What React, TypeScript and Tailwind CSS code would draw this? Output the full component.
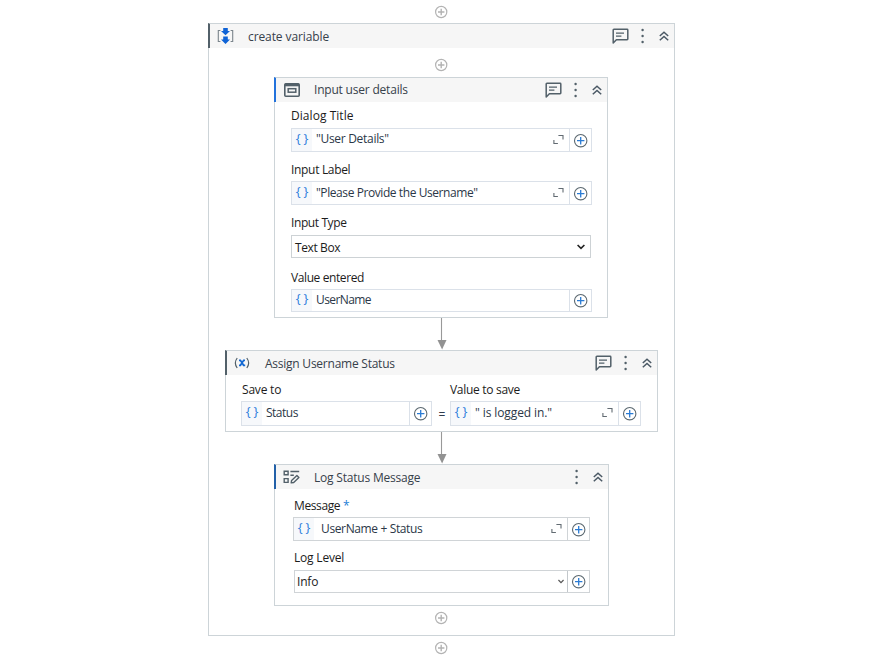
import type { ReactNode } from "react";
import { clsx } from "clsx";

function AddStep() {
  return (
    <svg className="block size-[14px] shrink-0" viewBox="0 0 14 14" fill="none" stroke="#b3b3b3">
      <circle cx="7.2" cy="7" r="5.6" strokeWidth="1.2" />
      <path d="M7.2 3.8v6.4M4 7h6.4" strokeWidth="1.4" />
    </svg>
  );
}

function AddButton() {
  return (
    <svg className="block size-[15px]" viewBox="0 0 15 15" fill="none">
      <circle cx="7.7" cy="7.7" r="6.2" stroke="#5b6870" strokeWidth="1.1" />
      <path d="M7.7 4v7.4M4 7.7h7.4" stroke="#2a7bd4" strokeWidth="1.3" />
    </svg>
  );
}

function CommentIcon() {
  return (
    <svg className="block h-[17px] w-[17px]" viewBox="0 0 17 17" fill="none" stroke="#526069" strokeWidth="1.5">
      <path d="M1.2 15V2q0-.7.7-.7h13.2q.7 0 .7.7v9q0 .7-.7.7H4.4z" strokeLinejoin="round" />
      <path d="M4 5.2h8M4 8.1h5.4" strokeWidth="1.3" />
    </svg>
  );
}

function DotsIcon() {
  return (
    <svg className="block h-[16px] w-[4px]" viewBox="0 0 4 16" fill="#526069">
      <circle cx="1.6" cy="2" r="1.2" />
      <circle cx="1.6" cy="8" r="1.2" />
      <circle cx="1.6" cy="14" r="1.2" />
    </svg>
  );
}

function CollapseIcon() {
  return (
    <svg className="block h-[10px] w-[10px]" viewBox="0 0 10 10" fill="none" stroke="#4b5965" strokeWidth="1.5">
      <path d="M.8 5 5 1.2 9.2 5M.8 9.3 5 5.5l4.2 3.8" />
    </svg>
  );
}

function ExpandIcon() {
  return (
    <svg className="block h-[11px] w-[11px]" viewBox="0 0 11 11" fill="none" stroke="#626b72" strokeWidth="1.1">
      <path d="M5.4 1.5h4.6v4M.9 6v3.5h4" />
    </svg>
  );
}

function Chevron({ small }: { small?: boolean }) {
  return (
    <svg
      className={small ? "block h-[5px] w-[6px]" : "block h-[6px] w-[8px]"}
      viewBox="0 0 8 6"
      fill="none"
      stroke={small ? "#555" : "#222"}
      strokeWidth="1.6"
    >
      <path d="M.6 1 4 4.4 7.4 1" />
    </svg>
  );
}

function SequenceIcon() {
  return (
    <svg className="block h-[16px] w-[17px]" viewBox="0 0 17 16" fill="none">
      <path d="M3.4 2.5H1.3v11h2.1M13.6 2.5h2.1v11h-2.1" stroke="#7b858c" strokeWidth="1.1" />
      <path d="M6.2 0h4.6v3h2.2L8.5 7.2 4 3h2.2zM6.2 8.6h4.6v2.8H13L8.5 16 4 11.4h2.2z" fill="#0f63d6" />
    </svg>
  );
}

function DialogIcon() {
  return (
    <svg className="block h-[14px] w-[16px]" viewBox="0 0 16 14" fill="none" stroke="#526069">
      <rect x=".8" y=".8" width="14.4" height="12.4" rx="1" strokeWidth="1.6" />
      <path d="M1 2h14" strokeWidth="2.6" />
      <rect x="4.2" y="5.7" width="7.6" height="3.5" strokeWidth="1.5" />
    </svg>
  );
}

function AssignIcon() {
  return (
    <svg className="block h-[12px] w-[16px]" viewBox="0 0 16 12" fill="none">
      <path d="M3.2 1Q-.5 6 3.2 11M12.8 1q3.7 5 0 10" stroke="#526069" strokeWidth="1.2" />
      <path d="M5 3.3h1.4l3.2 5h1.6M11 3.3H9.7L6.4 8.3H5" stroke="#1268d3" strokeWidth="1.7" />
    </svg>
  );
}

function LogIcon() {
  return (
    <svg className="block h-[14px] w-[17px]" viewBox="0 0 17 14" fill="none" stroke="#526069" strokeWidth="1.4">
      <path d="M1.2 1.2h3.9v3.6H1.2zM1.2 8.6h3.9v3.8H1.2zM7.4 1.5h8.8M7.4 5.2h3.4" />
      <path d="m8.2 12.9.4-2.5 5.3-4.9 2 2-5.2 5z" strokeLinejoin="round" />
    </svg>
  );
}

function Arrow() {
  return (
    <svg className="ml-[228px] block h-[32px] w-[11px] shrink-0" viewBox="0 0 11 32">
      <path d="M4.5 0v24" stroke="#999" strokeWidth="1.1" />
      <path d="M.5 22h9L5.1 31.6z" fill="#929292" />
    </svg>
  );
}

function Header({
  icon,
  title,
  accent,
  titleClass,
  comment = true,
  right,
}: {
  icon: ReactNode;
  title: string;
  accent: string;
  titleClass: string;
  comment?: boolean;
  right: string;
}) {
  return (
    <div
      className={clsx(
        "-mt-px -ml-px flex h-[25px] shrink-0 items-center border-t border-l-2 border-t-[#cdd4d8] bg-[#f6f6f6]",
        accent,
        right,
      )}
    >
      <div className="flex w-[17px] justify-center">{icon}</div>
      <div className={clsx("font-medium text-[#37414b]", titleClass)}>{title}</div>
      <div className="ml-auto flex items-center">
        {comment && <CommentIcon />}
        <div className="ml-[12px]">
          <DotsIcon />
        </div>
        <div className="ml-[14px]">
          <CollapseIcon />
        </div>
      </div>
    </div>
  );
}

function Label({ children, className }: { children: ReactNode; className: string }) {
  return <div className={clsx("h-4 shrink-0 leading-4 text-[#1c1c1c]", className)}>{children}</div>;
}

function Field({
  value,
  textClass,
  size,
  border = "border-[#dbe1e9]",
  expand = true,
}: {
  value: string;
  textClass: string;
  size: string;
  border?: string;
  expand?: boolean;
}) {
  return (
    <div className={clsx("flex shrink-0 items-stretch border", border, size)}>
      <div className="flex w-[20px] shrink-0 items-center justify-center gap-[3px] bg-[#f6f8fb] pb-[3px] text-[13px] text-[#3080dc]">
        <span>{"{"}</span>
        <span>{"}"}</span>
      </div>
      <div className={clsx("flex items-center text-[#2b3748]", textClass)}>{value}</div>
      {expand && (
        <div className="mr-[5px] ml-auto flex items-center pb-[2px]">
          <ExpandIcon />
        </div>
      )}
      <div className={clsx("flex w-[22px] shrink-0 items-center justify-center border-l", border, !expand && "ml-auto")}>
        <AddButton />
      </div>
    </div>
  );
}

export default function App() {
  return (
    <main className="h-[660px] w-[884px] overflow-hidden bg-white pt-[5px] pl-[208px] font-['Open_Sans','Noto_Sans',sans-serif] text-[12px] whitespace-pre">
      <div className="flex w-[467px] flex-col">
        <div className="ml-[226px]">
          <AddStep />
        </div>

        <section className="mt-[4px] flex h-[613px] flex-col border border-[#cdd4d8]">
          <Header
            icon={<SequenceIcon />}
            title="create variable"
            accent="border-l-[#526069]"
            titleClass="ml-[14px] pt-[2px] tracking-[-0.1px]"
            right="pl-[7px] pr-[5px]"
          />
          <div className="mt-[10px] ml-[225px]">
            <AddStep />
          </div>

          <section className="mt-[5px] ml-[65px] flex h-[241px] w-[334px] shrink-0 flex-col border border-[#cdd4d8]">
            <Header
              icon={<DialogIcon />}
              title="Input user details"
              accent="border-l-[#2272dc]"
              titleClass="ml-[14px] tracking-[-0.2px]"
              right="pl-[7px] pr-[5px]"
            />
            <div className="flex flex-col pl-[16px]">
              <Label className="mt-[6px] tracking-[0.05px]">Dialog Title</Label>
              <Field
                size="mt-[4px] h-[24px] w-[301px]"
                value={'"User Details"'}
                textClass="pl-[4px] pb-[2px] tracking-[-0.3px]"
              />
              <Label className="mt-[10px] tracking-[-0.32px]">Input Label</Label>
              <Field
                size="mt-[3px] h-[24px] w-[301px]"
                value={'"Please Provide the Username"'}
                textClass="pl-[4px] tracking-[-0.42px]"
              />
              <Label className="mt-[10px] tracking-[-0.4px]">Input Type</Label>
              <div className="mt-[4px] flex h-[23px] w-[300px] items-center justify-between border border-[#cdd2d5] pr-[5px] pl-[3px] text-[#1c1c1c]">
                <span className="pt-[2px] tracking-[-0.4px]">Text Box</span>
                <Chevron />
              </div>
              <Label className="mt-[12px] tracking-[-0.4px]">Value entered</Label>
              <Field
                size="mt-[3px] h-[23px] w-[301px]"
                value="UserName"
                textClass="pl-[4px] pb-[2px] tracking-[-0.6px]"
                expand={false}
              />
            </div>
          </section>

          <Arrow />

          <section className="ml-[16px] flex h-[82px] w-[433px] shrink-0 flex-col border border-[#cdd4d8]">
            <Header
              icon={<AssignIcon />}
              title="Assign Username Status"
              accent="border-l-[#526069]"
              titleClass="ml-[15px] pt-[2px] tracking-[-0.24px]"
              right="pl-[6px] pr-[5px]"
            />
            <div className="flex pl-[15px]">
              <div>
                <Label className="mt-[7px] pl-px tracking-[-0.2px]">Save to</Label>
                <Field
                  size="mt-[3px] h-[25px] w-[191px]"
                  value="Status"
                  textClass="pl-[4px] pb-[2px] tracking-[-0.5px]"
                  expand={false}
                />
              </div>
              <div className="mt-[31px] w-[18px] pl-[2px] text-center text-[#303c4d]">=</div>
              <div>
                <Label className="mt-[7px] tracking-[-0.3px]">Value to save</Label>
                <Field
                  size="mt-[3px] h-[25px] w-[191px]"
                  value={'" is logged in."'}
                  textClass="pl-[4px] pb-[2px] tracking-[-0.1px]"
                />
              </div>
            </div>
          </section>

          <Arrow />

          <section className="ml-[65px] flex h-[142px] w-[335px] shrink-0 flex-col border border-[#cdd4d8]">
            <Header
              icon={<LogIcon />}
              title="Log Status Message"
              accent="border-l-[#2260a8]"
              titleClass="ml-[14px] pt-[2px] tracking-[-0.2px]"
              right="pl-[7px] pr-[5px]"
              comment={false}
            />
            <div className="flex flex-col pl-[18px]">
              <Label className="mt-[9px] pl-px tracking-[-0.38px]">
                Message <span className="text-[#1b7ed6]">*</span>
              </Label>
              <Field
                size="mt-[3px] h-[24px] w-[297px]"
                border="border-[#d0d4d7]"
                value="UserName + Status"
                textClass="pl-[7px] tracking-[-0.37px]"
              />
              <Label className="mt-[9px] pl-px tracking-[-0.2px]">Log Level</Label>
              <div className="mt-[4px] ml-px flex h-[23px] w-[296px] border border-[#d0d4d7]">
                <div className="flex grow items-center justify-between pr-[3px] pl-[2px] text-[#1c1c1c]">
                  <span className="tracking-[-0.2px]">Info</span>
                  <Chevron small />
                </div>
                <div className="flex w-[22px] items-center justify-center border-l border-[#c3c8cc]">
                  <AddButton />
                </div>
              </div>
            </div>
          </section>

          <div className="mt-[5px] ml-[225px]">
            <AddStep />
          </div>
        </section>

        <div className="mt-[5px] ml-[226px]">
          <AddStep />
        </div>
      </div>
    </main>
  );
}
